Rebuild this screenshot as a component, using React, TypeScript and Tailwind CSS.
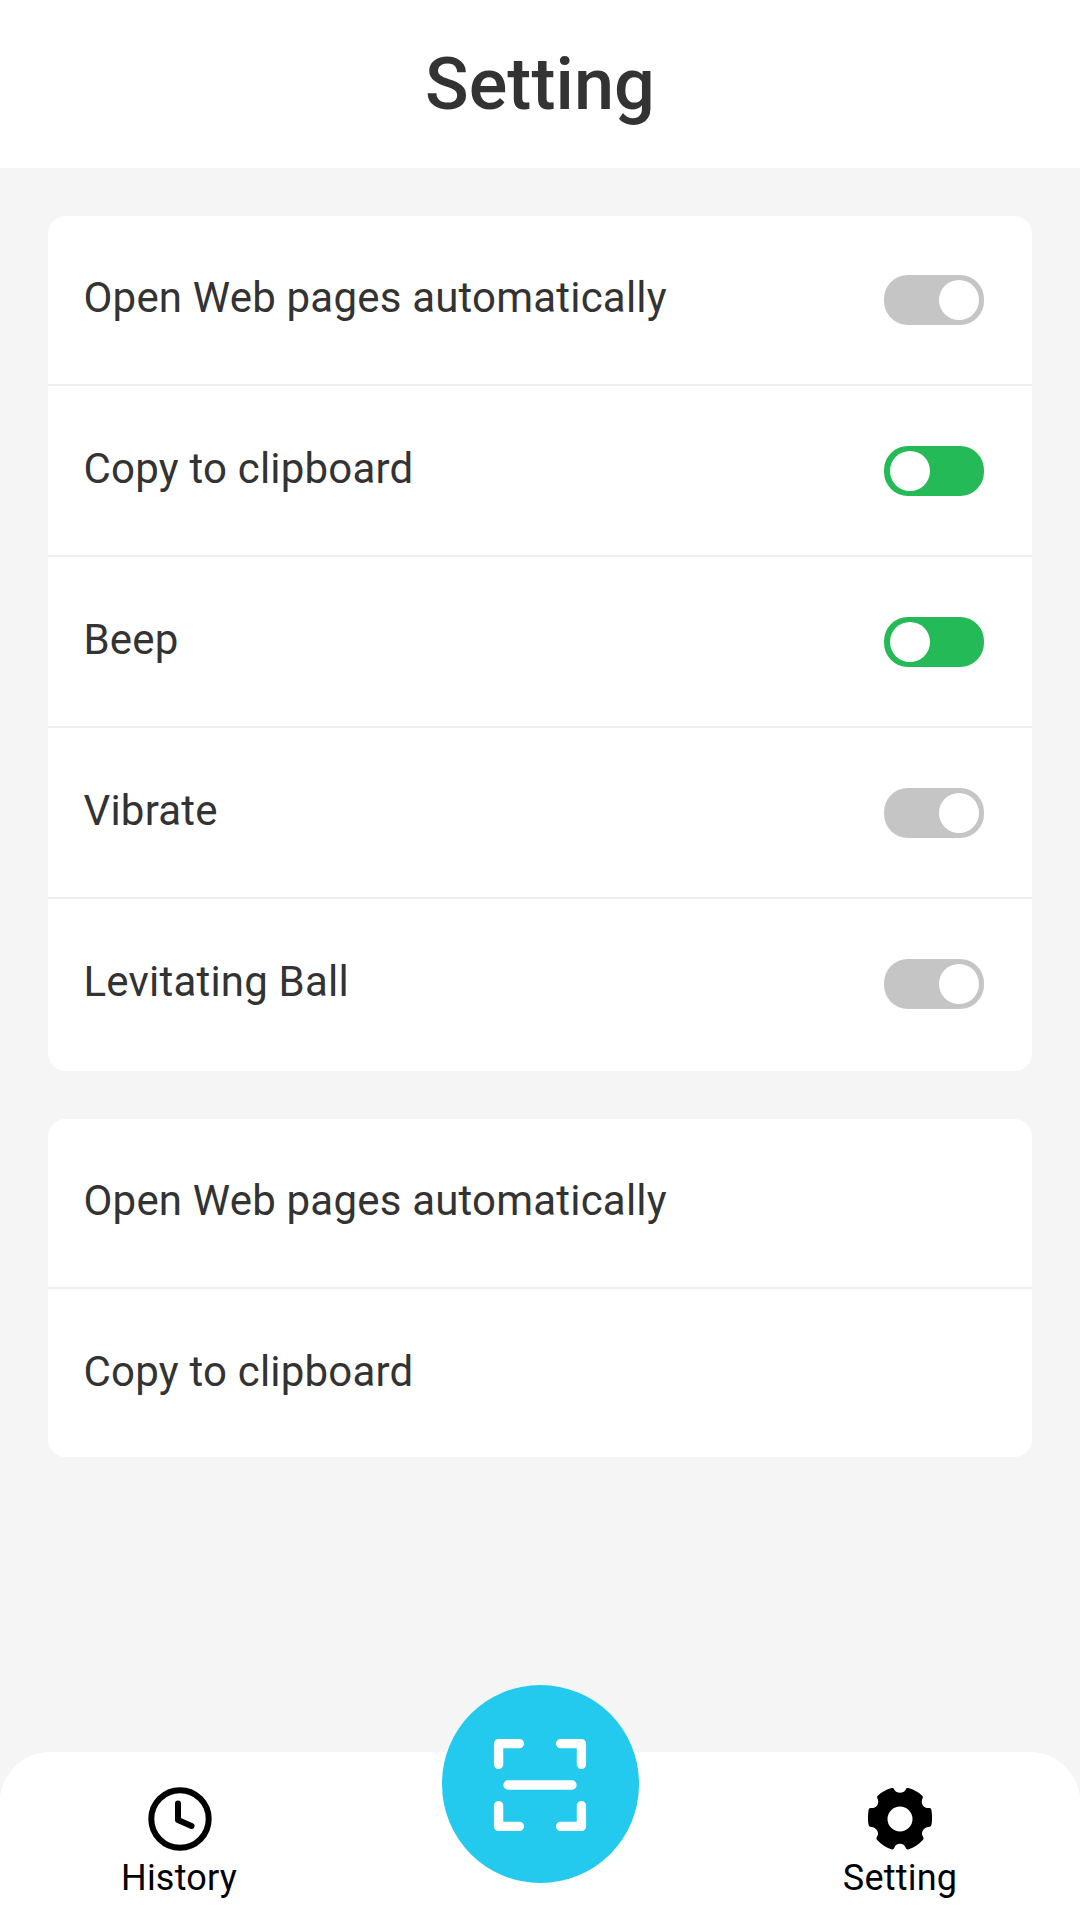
import React from "react";

const toggles = [
  { label: "Open Web pages automatically", on: false },
  { label: "Copy to clipboard", on: true },
  { label: "Beep", on: true },
  { label: "Vibrate", on: false },
  { label: "Levitating Ball", on: false },
];

const links = ["Open Web pages automatically", "Copy to clipboard"];

const Toggle = ({ on }: { on: boolean }) => (
  <div
    className={
      on
        ? "flex h-[50px] w-[100px] items-center justify-start rounded-[24px] bg-[#24ba57] pl-1.5"
        : "flex h-[50px] w-[100px] items-center justify-end rounded-[24px] bg-[#c5c5c5] pr-[5px]"
    }
  >
    <div className="size-10 rounded-full bg-white"></div>
  </div>
);

const HistoryIcon = () => (
  <svg className="size-16" viewBox="0 0 64 64" fill="none" stroke="#000" strokeLinecap="round" strokeLinejoin="round">
    <circle cx="32" cy="32" r="28.7" strokeWidth="6" />
    <path d="M30 16.5V33L43.5 39" strokeWidth="6" />
  </svg>
);

const SettingIcon = () => (
  <svg className="size-16" viewBox="0 0 64 64" fill="#000">
    <path
      fillRule="evenodd"
      d="M23.5 1C25 .6 25.8 1.2 26.4 2.7C27.4 4.8 29.5 5.7 32 5.7S36.6 4.8 37.6 2.7C38.2 1.2 39 .6 40.5 1C45.5 2.4 50.3 5 54 8.5C55.2 9.6 55 10.4 54.4 11.8C53.4 14.1 53.6 16.4 54.9 18.5S58.2 21 60.6 21C62.5 21 63.3 21.6 63.5 23.5C64.2 28.5 64.2 33.5 63.5 37.6C63.1 39.3 62.5 39.9 60.7 39.9C58.2 40 56.2 41.2 54.9 43.4C53.6 45.6 53.7 47.6 54.9 49.6C55.8 51.2 55.9 52 54.6 53.3C50.5 57.5 46 60.7 40.7 62.3C39.2 62.8 38.4 62.5 37.7 60.8C36.7 58.2 34.8 56.8 32 56.8S27.3 58.2 26.3 60.8C25.6 62.5 24.8 62.8 23.3 62.3C18 60.7 13.5 57.5 9.4 53.3C8.1 52 8.2 51.2 9.1 49.6C10.3 47.6 10.4 45.6 9.1 43.4C7.8 41.2 5.8 40 3.3 39.9C1.5 39.9 .9 39.3 .5 37.6C-.2 33.5-.2 28.5 .5 23.5C.7 21.6 1.5 21 3.4 21C5.8 21 7.8 20.6 9.1 18.5S10.6 14.1 9.6 11.8C9 10.4 8.8 9.6 10 8.5C13.7 5 18.5 2.4 23.5 1ZM32 19.5a12.5 12.5 0 1 0 0 25a12.5 12.5 0 1 0 0-25Z"
    />
  </svg>
);

const ScanIcon = () => (
  <svg className="size-24 shrink-0" viewBox="0 0 96 96" fill="none" stroke="#fff" strokeWidth="9.3" strokeLinecap="round">
    <path d="M6.6 27.4V6.6H27.4M68.6 6.6H89.4V27.4M89.4 68.6V89.4H68.6M27.4 89.4H6.6V68.6" strokeLinejoin="round" />
    <path d="M16 48H80" />
  </svg>
);

const App = () => {
  return (
    <div className="flex h-[1920px] w-[1080px] flex-col overflow-hidden bg-[#f5f5f5] font-['Roboto',sans-serif] text-[#333]">
      <header className="flex h-[168px] items-center justify-center bg-white pt-0.5">
        <h1 className="text-[72px] leading-[84px] font-medium tracking-[0.1px]">Setting</h1>
      </header>

      <main className="flex flex-1 flex-col gap-12 px-12 pt-12">
        <section className="rounded-[18px] bg-white">
          {toggles.map((item, i) => (
            <div key={item.label} className="relative flex h-[171px] items-start justify-between pr-12 pl-[35.5px]">
              <span className="pt-[57px] text-[42px] leading-[50px] tracking-[0.2px]">{item.label}</span>
              <div className="pt-[59px]">
                <Toggle on={item.on} />
              </div>
              {i < toggles.length - 1 && <div className="absolute inset-x-0 top-[168px] h-0.5 bg-[#eee]"></div>}
            </div>
          ))}
        </section>

        <section className="h-[338px] rounded-[18px] bg-white">
          {links.map((label, i) => (
            <div key={label} className="relative h-[171px] pt-[57px] pl-[35.5px]">
              <span className="block text-[42px] leading-[50px] tracking-[0.2px]">{label}</span>
              {i < links.length - 1 && <div className="absolute inset-x-0 top-[168px] h-0.5 bg-[#eee]"></div>}
            </div>
          ))}
        </section>
      </main>

      <nav className="relative flex h-[168px] justify-between rounded-t-[50px] bg-white px-[90px] pt-[35px] text-black">
        <div className="flex w-[180px] flex-col items-center">
          <HistoryIcon />
          <span className="mt-1.5 mr-0.5 text-[36px] leading-[42px] tracking-[0.2px]">History</span>
        </div>
        <div className="flex w-[180px] flex-col items-center">
          <SettingIcon />
          <span className="mt-1.5 text-[36px] leading-[42px] tracking-[0.2px]">Setting</span>
        </div>
        {/* scan button sits over the top edge of the bar */}
        <button className="absolute -top-[67px] left-[442px] flex h-[198px] w-[197px] items-center justify-center rounded-full bg-[#24caed] pt-0.5 pr-[1px]">
          <ScanIcon />
        </button>
      </nav>
    </div>
  );
};

export default App;
